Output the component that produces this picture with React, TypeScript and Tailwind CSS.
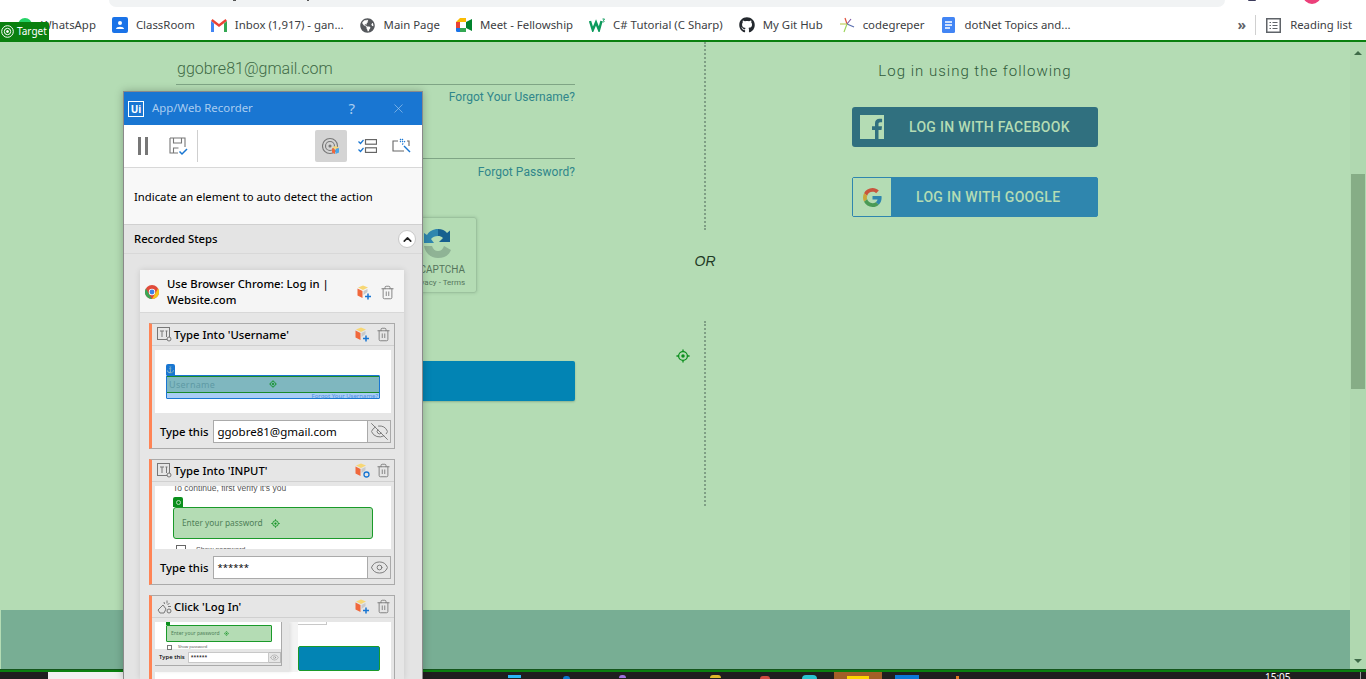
import type { ReactNode } from "react";
import { Eye, EyeOff, Trash2, X, ChevronUp } from "lucide-react";
import { FaGithub, FaGlobeAmericas } from "react-icons/fa";

const ui = "font-['Noto_Sans',sans-serif]";
const web = "font-['Roboto',sans-serif]";

function GoogleG({ size = 20 }: { size?: number }) {
  return (
    <svg width={size} height={size} viewBox="0 0 48 48">
      <path fill="#c8553d" d="M24 9.5c3.5 0 6.6 1.2 9.1 3.6l6.8-6.8C35.8 2.5 30.3 0 24 0 14.6 0 6.5 5.4 2.6 13.2l7.9 6.2C12.4 13.6 17.700 9.500 24 9.500z" />
      <path fill="#2f86ae" d="M47 24.500c0-1.600-.1-3.100-.4-4.500H24v9h12.900c-.6 3-2.200 5.500-4.700 7.200l7.600 5.900C44.300 37.900 47 31.800 47 24.500z" />
      <path fill="#c9a83a" d="M10.500 28.600c-.5-1.400-.8-3-.8-4.600s.3-3.200.8-4.600l-7.900-6.200C1 16.500 0 20.100 0 24s1 7.500 2.600 10.800l7.900-6.200z" />
      <path fill="#4a9a55" d="M24 48c6.500 0 11.900-2.100 15.800-5.800l-7.600-5.900c-2.100 1.400-4.900 2.300-8.200 2.300-6.300 0-11.600-4.200-13.500-9.900l-7.900 6.200C6.500 42.600 14.600 48 24 48z" />
    </svg>
  );
}

function FacebookBox() {
  return (
    <svg width="24" height="24" viewBox="0 0 24 24">
      <path
        fill="#b4dcb4"
        d="M0 0h24v24h-5.500v-9h3l.5-3.700h-3.500V9c0-1.100.4-1.800 1.900-1.800h1.700V3.900c-.4 0-1.400-.1-2.600-.1-2.700 0-4.500 1.600-4.500 4.600v2.900h-3V15h3v9H0z"
      />
    </svg>
  );
}

function ChromeIcon() {
  return (
    <svg width="14" height="14" viewBox="0 0 24 24">
      <circle cx="12" cy="12" r="12" fill="#e04a3a" />
      <path fill="#3aa655" d="M12 24A12 12 0 0 1 1.600 6l6 10.500 4.400 7.500z" />
      <path fill="#f5c518" d="M12 24l6-10.500L22.400 6A12 12 0 0 1 12 24z" />
      <circle cx="12" cy="12" r="5.500" fill="#fff" />
      <circle cx="12" cy="12" r="4.200" fill="#3b82e6" />
    </svg>
  );
}

// orange/yellow cube with a small blue badge
function CubeAdd({ link = false }: { link?: boolean }) {
  return (
    <svg width="15" height="15" viewBox="0 0 15 15">
      <path fill="#f7d774" d="M6 0.500l5 2-5 2.500-5-2.500z" />
      <path fill="#f0683c" d="M0.500 3.500l5 2.500v7l-5-2.500z" />
      <path fill="#c9c9c9" d="M6.500 6l4-2v3l-4 3z" />
      {link ? (
        <circle cx="11.500" cy="11.500" r="2.500" fill="none" stroke="#1976d2" strokeWidth="1.300" />
      ) : (
        <path stroke="#1976d2" strokeWidth="1.500" d="M8 11.500h6M11 8.500v6" />
      )}
    </svg>
  );
}

function TargetMark({ size = 16, className = "" }: { size?: number; className?: string }) {
  return (
    <svg width={size} height={size} viewBox="0 0 16 16" className={className} fill="none" stroke="#0a8f1c">
      <circle cx="8" cy="8" r="5" strokeWidth="1.500" />
      <circle cx="8" cy="8" r="2" fill="#0a8f1c" stroke="none" />
      <path strokeWidth="1.500" d="M8 0.500v2.500M8 13v2.500M0.500 8h2.500M13 8h2.500" />
    </svg>
  );
}

function TypeIcon() {
  return (
    <svg width="15" height="15" viewBox="0 0 15 15" fill="none" stroke="#777">
      <rect x="0.500" y="0.500" width="12" height="12" />
      <path d="M3 4h4M5 4v6M8.500 4h2M9.500 4v6" />
      <circle cx="12" cy="12" r="2" fill="#e6e6e6" />
    </svg>
  );
}

function ClickIcon() {
  return (
    <svg width="15" height="15" viewBox="0 0 15 15" fill="none" stroke="#777">
      <path d="M1 11l5-5 3 4-2 4H3z" />
      <circle cx="12" cy="12" r="2" />
      <path d="M7 3l.500 2M10 1.500v3M12.500 4l-2 2M14 7.500h-3" />
    </svg>
  );
}

function Bookmark({ icon, label }: { icon: ReactNode; label: string }) {
  return (
    <div className="flex items-center gap-2 shrink-0">
      <span className="w-4 h-4 flex items-center justify-center">{icon}</span>
      <span className="text-[11.4px] text-[#3c4043] leading-none">{label}</span>
    </div>
  );
}

function BrowserBars() {
  return (
    <header className={`shrink-0 bg-white ${ui}`}>
      <div className="h-[7px] flex pl-[109px] pr-[141px] relative">
        <div className="flex-1 bg-[#f1f3f4] rounded-b-[8px]" />
        <span className="absolute left-[233px] top-0 w-[3px] h-[1px] bg-[#555]" />
        <span className="absolute left-[307px] top-0 w-[2px] h-[1px] bg-[#555]" />
        <span className="absolute left-[1248px] top-0 w-[8px] h-[1px] bg-[#3b3b5c] rounded-b" />
        <span className="absolute left-[1303px] top-[-7px] w-[18px] h-[11px] bg-[#ec407a] rounded-b-full" />
      </div>
      <div className="h-[33px] flex items-center pt-[3px] pl-[17px] pr-[14px] gap-4">
        <Bookmark
          icon={<span className="w-[14px] h-[14px] rounded-full bg-[#25d366]" />}
          label="WhatsApp"
        />
        <Bookmark
          icon={
            <svg width="16" height="16" viewBox="0 0 16 16">
              <rect width="16" height="16" rx="2" fill="#1a73e8" />
              <circle cx="8" cy="6" r="2" fill="#fff" />
              <path fill="#fff" d="M4 12c0-3 8-3 8 0z" />
            </svg>
          }
          label="ClassRoom"
        />
        <Bookmark
          icon={
            <svg width="16" height="13" viewBox="0 0 16 13">
              <path fill="#ea4335" d="M0 2l8 6 8-6-1.500-2L8 5 1.500 0z" />
              <path fill="#4285f4" d="M0 2v11h3V4.500z" />
              <path fill="#34a853" d="M16 2v11h-3V4.500z" />
            </svg>
          }
          label="Inbox (1,917) - gan..."
        />
        <Bookmark icon={<FaGlobeAmericas size={15} color="#55585c" />} label="Main Page" />
        <Bookmark
          icon={
            <svg width="16" height="14" viewBox="0 0 16 14">
              <path fill="#fbbc04" d="M0 4l4-4h6v4z" />
              <path fill="#ea4335" d="M0 4h4v6H0z" />
              <path fill="#1a73e8" d="M0 10h4v4H1.500Q0 14 0 12.500z" />
              <path fill="#34a853" d="M4 10h6v4H4z" />
              <path fill="#00832d" d="M10 4l6-3v12l-6-3z" />
              <path fill="#fff" d="M4 4h6v6H4z" />
            </svg>
          }
          label="Meet - Fellowship"
        />
        <Bookmark
          icon={
            <svg width="16" height="14" viewBox="0 0 16 14">
              <path fill="none" stroke="#0d9a5c" strokeWidth="2.400" d="M1 3l2.800 9L7 4.500 10 12l2.500-9" />
              <path fill="none" stroke="#0d9a5c" d="M13.500 1h2l-1 1.500c1 .3.800 2-1 1.500" />
            </svg>
          }
          label="C# Tutorial (C Sharp)"
        />
        <Bookmark icon={<FaGithub size={16} color="#24292e" />} label="My Git Hub" />
        <Bookmark
          icon={
            <svg width="16" height="16" viewBox="0 0 16 16" fill="none" strokeWidth="1.200">
              <path stroke="#e0503c" d="M6 1l2 6" />
              <path stroke="#5a6fb0" d="M8 7l7 3" />
              <path stroke="#9bd45a" d="M8 7l-3 8" />
              <path stroke="#c0d060" d="M1 7h7" />
              <path stroke="#7d5ba6" d="M8 7l4-5" />
            </svg>
          }
          label="codegreper"
        />
        <Bookmark
          icon={
            <svg width="13" height="16" viewBox="0 0 13 16">
              <rect width="13" height="16" rx="1.500" fill="#4285f4" />
              <path stroke="#fff" strokeWidth="1.400" d="M3 5h7M3 8h7M3 11h5" />
            </svg>
          }
          label="dotNet Topics and..."
        />
        <div className="ml-auto flex items-center">
          <span className="text-[14px] text-[#5f6368] font-bold leading-none mr-[9px]">»</span>
          <span className="w-px h-[20px] bg-[#d0d0d0] mr-[10px]" />
          <svg width="15" height="15" viewBox="0 0 15 15" fill="none" stroke="#5f6368" className="mr-[9px]">
            <rect x="0.750" y="0.750" width="13.500" height="13.500" strokeWidth="1.500" />
            <path d="M3.500 4.500h1.500M6.500 4.500h5M3.500 7.500h1.500M6.500 7.500h5M3.500 10.500h1.500M6.500 10.500h5" />
          </svg>
          <span className="text-[11.3px] text-[#3c4043] leading-none">Reading list</span>
        </div>
      </div>
    </header>
  );
}

function Divider({ className }: { className: string }) {
  return <div className={`border-l-2 border-dotted border-[#7f9f85] ${className}`} />;
}

function WebPage() {
  return (
    <main className={`flex-1 min-h-0 flex bg-[#b4dcb4] ${web}`}>
      <div className="flex-1 flex flex-col min-w-0">
        <div className="flex-1 flex min-h-0">
          {/* login form */}
          <div className="ml-[176px] w-[399px] shrink-0 flex flex-col">
            <div className="h-[42px] border-b border-[#7fa585] flex items-end pb-[2px] pl-px text-[16px] font-light text-[#3f6a46] leading-[26px] mt-px">
              ggobre81@gmail.com
            </div>
            <p className="text-right text-[12px] tracking-[0.05px] text-[#30868b] mt-[4px] leading-[16px]">
              Forgot Your Username?
            </p>
            <div className="h-[54px] border-b border-[#7fa585]" />
            <p className="text-right text-[12px] tracking-[0.05px] text-[#30868b] mt-[5px] leading-[16px]">
              Forgot Password?
            </p>
            <div className="mt-[37px] self-end mr-[98px] w-[302px] h-[76px] border border-[#9cc29e] rounded-[3px] shadow-[0_0_3px_rgba(60,100,70,0.25)] flex justify-end pr-[3px]">
              <div className="w-[70px] flex flex-col items-center pt-[10px]">
                <svg width="32" height="32" viewBox="0 0 32 32" fill="none">
                  <path fill="#17608f" d="M16 1c4 0 7 1.500 9 4l3-2.500V14H17l4-4c-1.500-1.500-3-2-5-2z" />
                  <path fill="#2f86ae" d="M16 1C11 1 7 3.500 5 7l-3-2v10h10l-3-4c1.500-2 4-3 7-3z" />
                  <path fill="#8fb395" d="M2 18c1 7 7 12 14 12s11-3 13-8l-7-4c-1 3-3 5-6 5-3 0-5-2-6-5z" />
                </svg>
                <span className="text-[10px] text-[#55755c] leading-[12px] mt-[4px]">reCAPTCHA</span>
                <span className="text-[8px] text-[#55755c] leading-[10px] mt-[2px] whitespace-nowrap">Privacy - Terms</span>
              </div>
            </div>
            <div className="mt-[68px] h-[40px] bg-[#0284b4] rounded-[2px] shadow-[0_1px_2px_rgba(40,80,60,0.3)]" />
          </div>

          {/* OR divider */}
          <div className="ml-[129px] w-[2px] shrink-0 flex flex-col items-center">
            <Divider className="h-[188px]" />
            <span className="mt-[22px] text-[14px] italic text-[#1f3a25] font-['Liberation_Sans',sans-serif] leading-[18px] whitespace-nowrap">OR</span>
            <Divider className="mt-[51px] h-[185px]" />
          </div>

          {/* social logins */}
          <div className="ml-[146px] w-[246px] shrink-0 flex flex-col">
            <p className="mt-[19px] text-center text-[15px] font-light tracking-[1px] text-[#2f5a3a] leading-[20px]">
              Log in using the following
            </p>
            <div className="mt-[26px] h-[40px] bg-[#30707f] rounded-[3px] flex items-center pl-[8px]">
              <FacebookBox />
              <span className="ml-[25px] text-[14px] font-medium tracking-[0.3px] text-[#b4dcb4]">LOG IN WITH FACEBOOK</span>
            </div>
            <div className="mt-[30px] h-[40px] bg-[#2f86ae] rounded-[2px] border border-[#2f86ae] flex items-center">
              <span className="w-[38px] h-full bg-[#b4dcb4] flex items-center justify-center">
                <GoogleG size={19} />
              </span>
              <span className="ml-[25px] text-[14px] font-medium tracking-[0.3px] text-[#b4dcb4]">LOG IN WITH GOOGLE</span>
            </div>
          </div>
        </div>
        <div className="h-[59px] shrink-0 bg-[#78ae94] ml-px" />
      </div>

      {/* scrollbar */}
      <div className="w-[16px] shrink-0 bg-[#b0d8b0] flex flex-col items-center pt-[9px] pb-[6px]">
        <span className="w-0 h-0 border-x-[4px] border-x-transparent border-b-[4px] border-b-[#3f6a48]" />
        <div className="w-[14px] h-[215px] bg-[#86ad86] mt-[119px]" />
        <span className="mt-auto w-0 h-0 border-x-[4px] border-x-transparent border-t-[4px] border-t-[#3f6a48]" />
      </div>
    </main>
  );
}

function Taskbar() {
  return (
    <footer className="h-[10px] shrink-0 bg-[#1f1f1f] border-t-[1px] border-[#14551c] relative">
      <div className="h-[2px] bg-[#0a800f]" />
      <div className="h-[7px] flex items-start">
        <div className="w-[48px] h-full" />
        <div className="w-[300px] h-full bg-[#f0f0f0]" />
        <div className="w-[160px] h-full" />
        <span className="w-[13px] h-[3px] bg-[#29b6f6] mt-[3px]" />
        <span className="ml-[42px] w-[7px] h-[3px] bg-[#0b78d0] rounded-t-full mt-[4px]" />
        <span className="ml-[49px] w-[7px] h-[3px] bg-[#a070e0] rounded-t-full mt-[3px]" />
        <span className="ml-[84px] w-[11px] h-[3px] bg-[#e0b82a] rounded-t-full mt-[3px]" />
        <span className="ml-[39px] w-[10px] h-[3px] bg-[#d04a40] rounded-t-full mt-[4px]" />
        <span className="ml-[32px] w-[15px] h-[4px] bg-[#28c4d0] rounded-t-full mt-[3px]" />
        <div className="ml-[17px] w-[48px] h-full bg-[#a35f27] flex justify-center pt-[4px]">
          <span className="w-[22px] h-[3px] bg-[#ffd400]" />
        </div>
        <span className="ml-[13px] w-[24px] h-[4px] bg-[#0b78d8] mt-[3px]" />
        <span className="ml-[37px] w-[3px] h-[3px] bg-[#e07a20] mt-[4px]" />
        <span className="ml-[306px] text-[10px] leading-[12px] mt-[-1px] text-white font-['Noto_Sans',sans-serif]">15:05</span>
        <span className="ml-[69px] w-px h-full bg-[#9a9a9a]" />
      </div>
    </footer>
  );
}

function Step({
  icon,
  title,
  value,
  hidden,
  link,
  previewClass,
  children,
  footer = true,
}: {
  icon: ReactNode;
  title: string;
  value?: string;
  hidden?: boolean;
  link?: boolean;
  previewClass: string;
  children: ReactNode;
  footer?: boolean;
}) {
  return (
    <section className="border border-[#aaaaaa] border-l-[3px] border-l-[#ff8455] bg-[#e6e6e6] shrink-0">
      <div className="h-[22px] border-b border-[#d0d0d0] flex items-center pl-[5px] pr-[3px]">
        {icon}
        <span className="ml-[2px] text-[11.3px] font-medium text-black leading-none">{title}</span>
        <span className="ml-auto mr-[6px]"><CubeAdd link={link} /></span>
        <Trash2 size={15} strokeWidth={1.400} color="#777" />
      </div>
      <div className={`ml-[3px] mr-[3px] mt-[4px] bg-white relative overflow-hidden ${previewClass}`}>{children}</div>
      {footer && (
        <div className="h-[35px] flex items-center pl-[8px] pr-[3px] pt-[2px]">
          <span className="text-[11.3px] font-medium text-black mr-[5px] pt-[1px]">Type this</span>
          <div className={`flex-1 h-[23px] border border-[#aaaaaa] bg-white flex items-center pl-[3px] text-black leading-none ${hidden ? "text-[11.5px]" : "text-[9.5px]"}`}>
            {value}
          </div>
          <div className="w-[23px] h-[23px] border border-l-0 border-[#aaaaaa] flex items-center justify-center">
            {hidden ? <EyeOff size={19} strokeWidth={1.200} color="#777" /> : <Eye size={19} strokeWidth={1.200} color="#777" />}
          </div>
        </div>
      )}
    </section>
  );
}

function Recorder() {
  return (
    <aside className={`absolute left-[123px] top-[91px] w-[300px] h-[588px] bg-[#f8f8f8] border border-[#8a8a8a] border-b-0 shadow-[0_0_8px_rgba(0,0,0,0.25)] flex flex-col overflow-hidden ${ui}`}>
      <div className="h-[33px] shrink-0 bg-[#1976d2] flex items-center pl-[4px] text-[#a9cdf0]">
        <span className="w-[16px] h-[16px] border-[1.500px] border-white flex items-center justify-center text-[10px] font-bold text-white leading-none">Ui</span>
        <span className="ml-[8px] text-[11.4px] leading-none pb-[2px]">App/Web Recorder</span>
        <span className="ml-auto text-[15px] leading-none">?</span>
        <X size={15} strokeWidth={1} className="ml-[36px] mr-[16px]" />
      </div>

      <div className="h-[43px] shrink-0 bg-white border-b border-[#d8d8d8] flex items-center pl-[14px] pr-[10px]">
        <span className="w-[10px] h-[18px] border-x-[3px] border-[#777]" />
        <svg width="19" height="19" viewBox="0 0 19 19" fill="none" stroke="#777" strokeWidth="1.100" className="ml-[21px]">
          <path d="M1 1h15v9M1 1v15h8" />
          <path d="M4.500 1v5h8V1M4.500 16v-5h5" />
          <path stroke="#1976d2" strokeWidth="1.500" d="M10.500 14.500l2.500 2.500 5-5" />
        </svg>
        <span className="ml-[9px] w-px h-[32px] bg-[#cfcfcf]" />
        <div className="ml-auto mr-[11px] w-[32px] h-[32px] bg-[#d4d4d4] rounded-[2px] flex items-center justify-center">
          <svg width="18" height="18" viewBox="0 0 18 18" fill="none" stroke="#777" strokeWidth="1.100">
            <circle cx="8" cy="9" r="7.500" />
            <circle cx="8" cy="9" r="4.500" />
            <circle cx="8" cy="9" r="1" fill="#777" />
            <path fill="#f7d774" stroke="none" d="M13 9l4 1.500-4 1.500-3-1.500z" />
            <path fill="#f0683c" stroke="none" d="M10 11l3 1.500V17l-3-1.500z" />
            <path fill="#4aa8e8" stroke="none" d="M13.500 12.500l3.500-1.500v4.500l-3.500 1.500z" />
          </svg>
        </div>
        <svg width="19" height="14" viewBox="0 0 19 14" fill="none" stroke="#666" strokeWidth="1.200">
          <rect x="7.500" y="0.600" width="11" height="4.600" />
          <rect x="7.500" y="8.800" width="11" height="4.600" />
          <path stroke="#1976d2" d="M0.500 2.500l2 2 3-3.500M0.500 10.500l2 2 3-3.500" />
        </svg>
        <svg width="20" height="16" viewBox="0 0 20 16" fill="none" stroke="#666" strokeWidth="1.100" className="ml-[15px]">
          <path d="M6 3H1v10h11M15 3h2v5" />
          <path stroke="#1976d2" strokeDasharray="1.500 1.500" d="M8 1l3 3M11 1l-3 3M13 3l-3 4" />
          <path stroke="#1976d2" strokeWidth="1.400" d="M12 8l6 6" />
        </svg>
      </div>

      <div className="h-[57px] shrink-0 bg-[#f8f8f8] border-b border-[#d0d0d0] flex items-center pl-[10px] pt-[1px] text-[11.3px] text-black leading-none">
        Indicate an element to auto detect the action
      </div>

      <div className="flex-1 min-h-0 bg-[#e4e4e4] flex flex-col">
        <div className="h-[28px] shrink-0 flex items-center pl-[10px] pr-[6px]">
          <span className="text-[11.3px] font-medium text-black leading-none">Recorded Steps</span>
          <span className="ml-auto w-[18px] h-[18px] rounded-full bg-white border border-[#c8c8c8] flex items-center justify-center">
            <ChevronUp size={13} strokeWidth={3} color="#222" />
          </span>
        </div>
        <div className="h-px bg-[#d8d8d8] shrink-0" />

        <div className="mt-[16px] ml-[16px] w-[264px] flex-1 min-h-0 bg-[#e6e6e6] shadow-[0_0_6px_rgba(0,0,0,0.12)] flex flex-col">
          <div className="h-[43px] shrink-0 bg-[#f5f5f5] border-b border-[#d8d8d8] flex items-center pl-[5px] pr-[9px] pt-[2px]">
            <ChromeIcon />
            <p className="ml-[8px] w-[180px] text-[11.3px] font-medium text-black leading-[16px]">Use Browser Chrome: Log in | Website.com</p>
            <span className="ml-auto mr-[8px]"><CubeAdd /></span>
            <Trash2 size={15} strokeWidth={1.400} color="#777" />
          </div>

          <div className="pl-[9px] pr-[9px] pt-[10px] flex flex-col gap-[10px]">
            <Step icon={<TypeIcon />} title="Type Into 'Username'" value="ggobre81@gmail.com" hidden previewClass="h-[63px]">
              <span className="absolute left-[11px] top-[14px] w-[9px] h-[11px] bg-[#1976d2] rounded-t-[2px] flex items-center justify-center text-[7px] text-white leading-none">⚓</span>
              <div className="absolute left-[11px] top-[25px] w-[214px] h-[24px] border border-[#1976d2] rounded-[1px] bg-[#a9cdf5]">
                <div className="h-[17px] bg-[#7fb7bf] border-y border-[#1a8a2a] flex items-center pl-[2px] text-[9px] tracking-[0.3px] text-[#5e9aa5] leading-none relative">
                  Username
                  <TargetMark size={8} className="absolute left-[102px] top-[3px]" />
                </div>
                <p className="text-right text-[6px] text-[#4a90e2] leading-[6px] pr-px">Forgot Your Username?</p>
              </div>
            </Step>
            <Step icon={<TypeIcon />} title="Type Into 'INPUT'" value="******" link previewClass="h-[63px]">
              <p className="absolute left-[18px] top-[-3px] text-[8.5px] text-[#555] leading-[10px] font-['Liberation_Sans',sans-serif] whitespace-nowrap">To continue, first verify it's you</p>
              <span className="absolute left-[18px] top-[11px] w-[10px] h-[10px] bg-[#0a8f1c] rounded-t-[2px] flex items-center justify-center">
                <span className="w-[5px] h-[5px] rounded-full border border-[#b4dcb4]" />
              </span>
              <div className="absolute left-[18px] top-[21px] w-[200px] h-[32px] bg-[#b4dcb4] border-[1.500px] border-[#1a9a2a] rounded-[3px] flex items-center pl-[8px] text-[8.3px] text-[#4f8058] leading-none">
                Enter your password
                <TargetMark size={9} className="ml-[8px]" />
              </div>
              <span className="absolute left-[21px] top-[59px] w-[10px] h-[10px] border border-[#666]" />
              <span className="absolute left-[41px] top-[59px] text-[7px] text-[#555] leading-[10px] font-['Liberation_Sans',sans-serif]">Show password</span>
            </Step>
            <Step icon={<ClickIcon />} title="Click 'Log In'" previewClass="h-[60px]" footer={false}>
              <span className="absolute left-[143px] top-0 w-[29px] h-[3px] bg-white border-b border-r border-[#c8c8c8]" />
              <div className="absolute left-[143px] top-[24px] w-[82px] h-[25px] bg-[#0284b4] border border-[#1a9a2a] rounded-[2px]" />
              {/* the recorder window caught inside its own snapshot */}
              <div className="absolute left-0 top-0 w-[143px] h-[50px] bg-[#f3f3f3]">
                <div className="w-[134px] h-full bg-[#e6e6e6] shadow-[2px_0_3px_rgba(0,0,0,0.08)]">
                  <div className="w-[127px] h-[44px] border-r border-b border-[#aaaaaa] bg-[#e6e6e6]">
                    <div className="w-[126px] h-[27px] bg-white relative">
                      <span className="absolute left-[11px] top-0 w-[4px] h-[3px] bg-[#0a8f1c]" />
                      <div className="absolute left-[11px] top-[3px] w-[106px] h-[17px] bg-[#b4dcb4] border border-[#1a9a2a] rounded-[1px] flex items-center pl-[4px] text-[5px] text-[#4f8058] leading-none">
                        Enter your password
                        <TargetMark size={5} className="ml-[4px]" />
                      </div>
                      <span className="absolute left-[12px] top-[23px] w-[5px] h-[5px] border border-[#777]" />
                      <span className="absolute left-[23px] top-[22px] text-[4px] text-[#555] leading-[6px]">Show password</span>
                    </div>
                    <div className="flex items-center h-[16px] pl-[4px] text-[6px] font-medium text-black leading-none">
                      Type this
                      <span className="ml-[3px] w-[81px] h-[11px] bg-white border border-[#c8c8c8] text-[5px] pl-[2px] leading-[9px]">******</span>
                      <span className="w-[12px] h-[11px] border border-l-0 border-[#bbbbbb] flex items-center justify-center">
                        <Eye size={9} strokeWidth={1} color="#777" />
                      </span>
                    </div>
                  </div>
                </div>
              </div>
            </Step>
          </div>
        </div>
      </div>
    </aside>
  );
}

export default function App() {
  return (
    <div className="relative w-[1366px] h-[679px] overflow-hidden flex flex-col">
      <BrowserBars />
      <div className="h-[2px] shrink-0 bg-[#0a800f]" />
      <WebPage />
      <Taskbar />

      {/* UiPath overlays */}
      <div className="absolute left-0 top-[22px] w-[49px] h-[18px] bg-[#0a800f] rounded-tr-[2px] flex items-center pl-px text-white font-['Noto_Sans',sans-serif]">
        <svg width="13" height="13" viewBox="0 0 13 13" fill="none" stroke="#fff">
          <circle cx="6.500" cy="6.500" r="5.800" />
          <circle cx="6.500" cy="6.500" r="3.200" />
          <circle cx="6.500" cy="6.500" r="1" fill="#fff" />
        </svg>
        <span className="ml-[3px] text-[10px] leading-none">Target</span>
      </div>
      <TargetMark size={14} className="absolute left-[676px] top-[349px]" />
      <Recorder />
    </div>
  );
}
